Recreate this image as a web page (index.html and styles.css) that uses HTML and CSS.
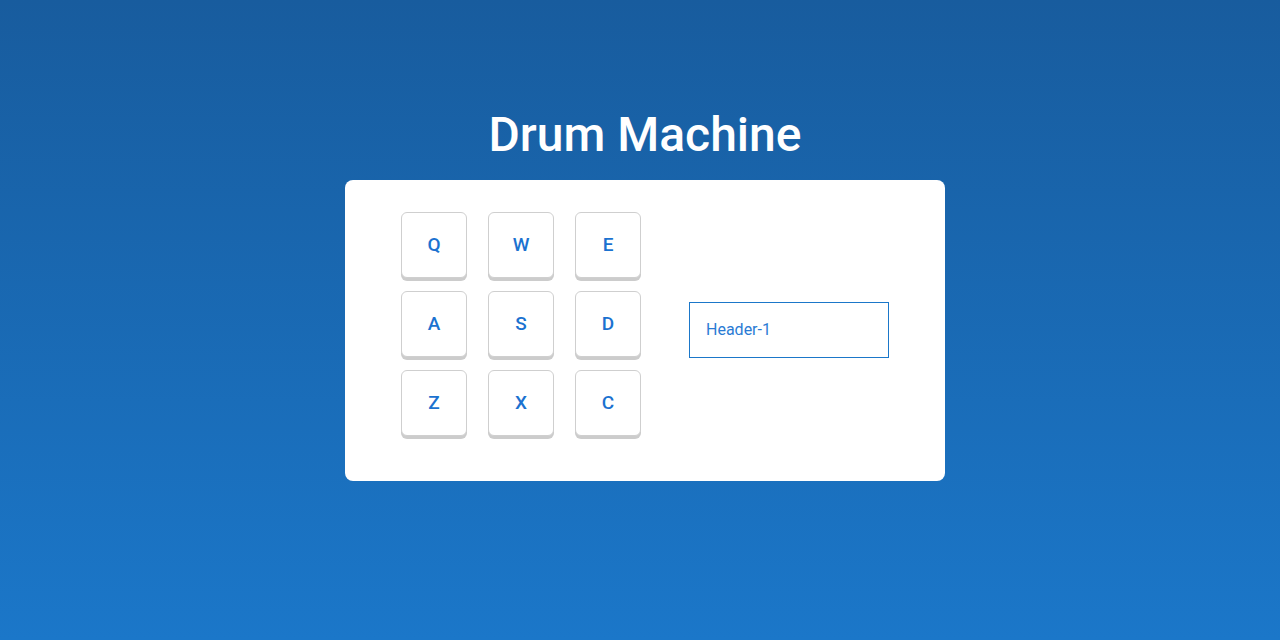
FILE: index.html
```html
<!DOCTYPE html>
<html>
<head>
<meta charset="utf-8">
<link rel="stylesheet" href="styles.css">
</head>
<body>
<main class="page">
  <h1 class="title">Drum Machine</h1>
  <section class="machine">
    <div class="pads">
      <button class="pad">Q</button>
      <button class="pad">W</button>
      <button class="pad">E</button>
      <button class="pad">A</button>
      <button class="pad">S</button>
      <button class="pad">D</button>
      <button class="pad">Z</button>
      <button class="pad">X</button>
      <button class="pad">C</button>
    </div>
    <div class="display">Header-1</div>
  </section>
</main>
</body>
</html>
```

FILE: styles.css
```css
html, body {
  margin: 0;
  height: 100%;
}
body {
  background: linear-gradient(to bottom, #185c9e 0%, #1b77c9 100%);
  font-family: Roboto, "Liberation Sans", sans-serif;
  overflow: hidden;
}
.page {
  display: flex;
  flex-direction: column;
  align-items: center;
  padding-left: 10px;
  padding-top: 106px;
}
.title {
  margin: 0 0 16px;
  color: #fff;
  font-size: 48px;
  font-weight: 500;
  line-height: 58px;
}
.machine {
  box-sizing: border-box;
  width: 600px;
  height: 301px;
  background: #fff;
  border-radius: 8px;
  padding: 32px 56px 34px;
  display: flex;
  align-items: center;
  gap: 48px;
}
.pads {
  align-self: flex-start;
  display: grid;
  grid-template-columns: repeat(3, 66px);
  grid-auto-rows: 66px;
  column-gap: 21px;
  row-gap: 13px;
}
.pad {
  box-sizing: border-box;
  width: 66px;
  height: 66px;
  border: 1px solid #cfcfcf;
  border-radius: 6px;
  background: #fff;
  box-shadow: 0 3px 0 #cccccc;
  color: #1b72d0;
  font-family: Roboto, "Liberation Sans", sans-serif;
  font-size: 19px;
  font-weight: 500;
  padding: 0 0 2px;
  cursor: pointer;
}
.display {
  box-sizing: border-box;
  width: 200px;
  height: 56px;
  border: 1px solid #1b77c9;
  color: #2a7bd4;
  font-size: 16px;
  padding: 0 16px;
  display: flex;
  align-items: center;
}
```
